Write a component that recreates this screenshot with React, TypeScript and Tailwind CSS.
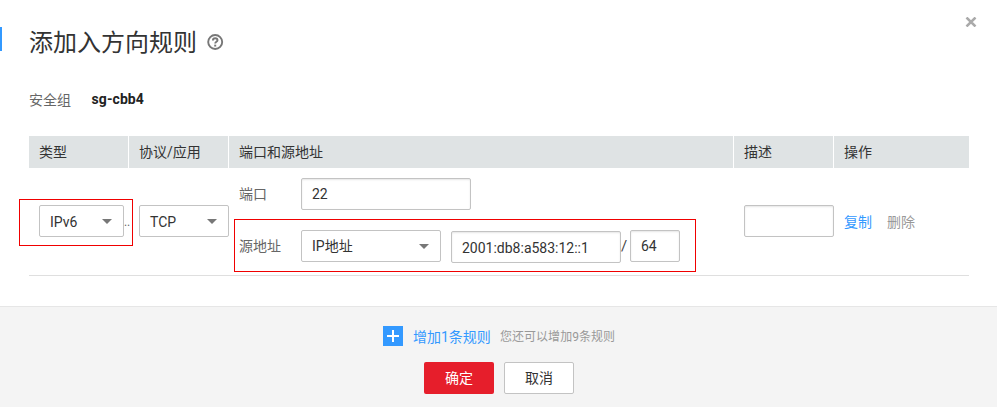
import type { ReactNode } from "react";

function Cell({ children, className = "" }: { children?: ReactNode; className?: string }) {
  return (
    <div className={`flex h-8 items-center border-r border-white bg-[#dfe3e4] pl-2.5 text-[#333] last:border-r-0 ${className}`}>
      {children}
    </div>
  );
}

function Select({ value, className = "", textClassName = "pt-0.5" }: { value: string; className?: string; textClassName?: string }) {
  return (
    <button
      type="button"
      className={`flex h-8 shrink-0 items-center justify-between rounded-[2px] border border-[#c3c3c3] bg-white pr-[11px] pl-2.5 text-[#333] ${className}`}
    >
      <span className={`leading-5 ${textClassName}`}>{value}</span>
      <svg width="10" height="5" viewBox="0 0 10 5" fill="#777">
        <path d="M0 0h10L5 5z" />
      </svg>
    </button>
  );
}

function Field({ value = "", label, className = "" }: { value?: string; label: string; className?: string }) {
  return (
    <input
      aria-label={label}
      defaultValue={value}
      className={`block h-8 shrink-0 rounded-[2px] border border-[#c3c3c3] bg-white px-2.5 text-[#333] shadow-[inset_0_1px_2px_rgba(0,0,0,0.1)] outline-none ${className}`}
    />
  );
}

export default function App() {
  return (
    <div className="relative flex h-[407px] w-[997px] flex-col overflow-hidden bg-white font-['Roboto','Noto_Sans_CJK_SC',sans-serif] text-sm leading-5 text-[#666]">
      <header className="flex h-[85px] items-start justify-between">
        <div className="flex pt-[27px]">
          <span className="h-6 w-0.5 bg-[#3399ff]" />
          <h1 className="ml-[27px] text-2xl leading-8 text-[#333]">添加入方向规则</h1>
          <svg className="mt-[7px] ml-2.5" width="17" height="16" viewBox="0 0 17 16" fill="none" stroke="#777">
            <circle cx="8.2" cy="8" r="7" strokeWidth="1.9" />
            <path d="M5.9 6.4C5.9 4.9 6.9 4.2 8.2 4.2s2.3.8 2.3 2c0 1.5-2.3 1.6-2.3 3.3" strokeWidth="1.9" />
            <path d="M7.2 11.6h2" strokeWidth="1.9" />
          </svg>
        </div>
        <svg className="mt-[17px] mr-5" width="12" height="10" viewBox="0 0 12 10" stroke="#aaa" strokeWidth="2.5">
          <path d="M1.5.5l9 9M10.5.5l-9 9" />
        </svg>
      </header>

      <div className="flex h-[51px] items-start pt-[5px] pl-[29px]">
        <span className="w-[62.5px]">安全组</span>
        <span className="-mt-px font-bold tracking-[0.1px] text-[#222]">sg-cbb4</span>
      </div>

      <div className="ml-[29px] w-[940px]">
        <div className="grid grid-cols-[100px_100px_505px_100px_135px]">
          <Cell>类型</Cell>
          <Cell>协议/应用</Cell>
          <Cell>端口和源地址</Cell>
          <Cell>描述</Cell>
          <Cell>操作</Cell>
        </div>
        <div className="grid h-[108px] grid-cols-[100px_100px_505px_100px_135px] border-b border-[#dfdfdf]">
          <div className="flex pt-[37px] pl-2.5">
            <Select value="IPv6" className="w-[85px]" />
            <span className="pt-[7px] text-xs leading-5 tracking-[-0.2px]">..</span>
          </div>
          <div className="pt-[37px] pl-2.5">
            <Select value="TCP" className="w-[90px]" />
          </div>
          <div className="flex flex-col gap-5 pt-2.5 pl-2.5">
            <div className="flex h-8 items-center">
              <span className="w-[62px]">端口</span>
              <Field label="端口" value="22" className="w-[170px]" />
            </div>
            <div className="flex h-8 items-center">
              <span className="w-[62px]">源地址</span>
              <Select value="IP地址" className="w-[140px]" textClassName="pt-0" />
              <Field label="IP" value="2001:db8:a583:12::1" className="mt-0.5 ml-2.5 w-[170px] pt-0.5" />
              <span className="w-[9px] text-[15px] text-[#444]">/</span>
              <Field label="前缀" value="64" className="w-[50px]" />
            </div>
          </div>
          <div className="pt-[37px] pl-2.5">
            <Field label="描述" className="w-[90px]" />
          </div>
          <div className="flex gap-[15px] pt-11 pl-2.5">
            <a className="text-[#3399ff]">复制</a>
            <a className="text-[#999]">删除</a>
          </div>
        </div>
      </div>

      <div className="pointer-events-none absolute top-[199px] left-[19px] h-[47px] w-[114px] border border-[#f00000]" />
      <div className="pointer-events-none absolute top-[219px] left-[234px] h-[53px] w-[462px] border border-[#f00000]" />

      <footer className="mt-[30px] flex grow flex-col border-t border-[#e6e6e6] bg-[#f4f4f4]">
        <div className="mt-[19px] ml-[383px] flex h-5 items-center">
          <span className="flex size-5 items-center justify-center bg-[#3399ff]">
            <svg width="12" height="12" viewBox="0 0 12 12" stroke="#fff" strokeWidth="2">
              <path d="M6 0v12M0 6h12" />
            </svg>
          </span>
          <a className="ml-2.5 pt-0.5 text-[#3399ff]">增加1条规则</a>
          <span className="ml-[9px] pt-0.5 text-xs tracking-[0.05px] text-[#999]">您还可以增加9条规则</span>
        </div>
        <div className="mt-4 ml-[424px] flex gap-2.5">
          <button type="button" className="h-8 w-[70px] rounded-[2px] bg-[#e61e2b] text-white">确定</button>
          <button type="button" className="h-8 w-[70px] rounded-[2px] border border-[#c3c3c3] bg-white text-[#333]">取消</button>
        </div>
      </footer>
    </div>
  );
}
